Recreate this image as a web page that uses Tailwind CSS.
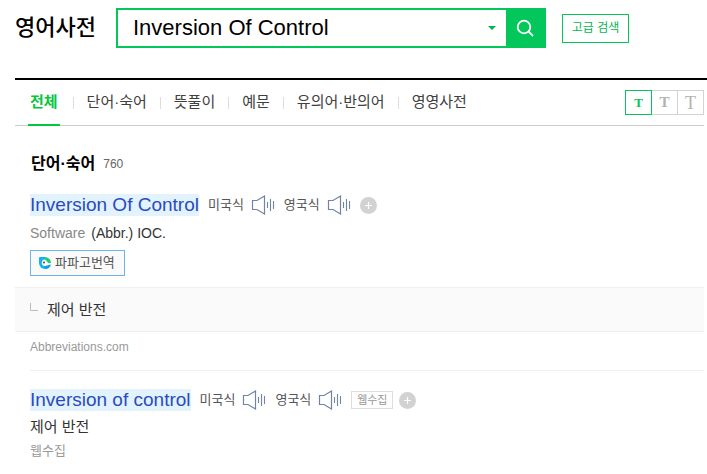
<!DOCTYPE html>
<html lang="ko">
<head>
    <meta charset="UTF-8">
    <meta name="viewport" content="width=device-width, initial-scale=1.0">
    <title>영어사전 - Inversion Of Control</title>
    <script src="https://cdn.jsdelivr.net/npm/@tailwindcss/browser@4"></script>
    <style>
        body { font-family: 'Liberation Sans', 'Noto Sans CJK KR', sans-serif; }
    </style>
</head>
<body class="bg-white text-[#333]">
    <svg class="hidden" aria-hidden="true">
        <symbol id="speaker" viewBox="0 0 24 20">
            <path d="M1.5 5.5H6L13.5 1v18L6 14.5H1.5z" fill="none" stroke="#7184a3" stroke-width="1.2"/>
            <path d="M16.5 7v6M19.5 4v12M22.5 6v8" fill="none" stroke="#7184a3" stroke-width="1.1"/>
        </symbol>
        <symbol id="plus" viewBox="0 0 17 17">
            <circle cx="8.5" cy="8.5" r="8.5" fill="#d2d2d2"/>
            <path d="M8.5 5v7M5 8.5h7" stroke="#fff" stroke-width="1.2"/>
        </symbol>
    </svg>

    <!-- Header -->
    <header class="flex items-center pl-[15px] pt-2">
        <h1 class="w-[101px] shrink-0 text-[22px] leading-10 font-medium text-black"><a href="#">영어사전</a></h1>
        <form class="flex h-10 w-[430px] border-2 border-[#03c75a]">
            <input type="text" id="query" name="query" value="Inversion Of Control" aria-label="검색어"
                class="min-w-0 flex-1 pl-[15px] pb-[2px] text-[22px] text-black focus:outline-none">
            <button type="button" aria-label="자동완성 펼치기" class="flex w-7 items-center justify-center">
                <svg class="h-1 w-2" viewBox="0 0 8 4"><path d="M0 0h8L4 4z" fill="#03b550"/></svg>
            </button>
            <button type="submit" aria-label="검색" class="flex w-[38px] items-center justify-center bg-[#03c75a]">
                <svg class="size-[18px]" viewBox="0 0 18 18" fill="none" stroke="#fff" stroke-width="1.8">
                    <circle cx="8" cy="8" r="6.3"/>
                    <path d="M12.4 12.4L17 17"/>
                </svg>
            </button>
        </form>
        <a href="#" class="ml-4 flex h-[29px] w-[67px] shrink-0 items-center justify-center border border-[#03c75a] text-xs text-[#03b550]">고급 검색</a>
    </header>

    <main class="mt-[30px] ml-[15px] border-t-2 border-black">
        <div class="mr-[3px]">
            <!-- Tabs -->
            <div class="flex h-[46px] items-center justify-between border-b border-[#ccc]">
                <nav class="flex h-[46px] items-center gap-[13px] pl-[13px] text-[15px] text-[#404040]">
                    <a href="#" class="flex h-[46px] items-center border-b-2 border-[#03c73c] px-[2px] pt-[2px] font-bold text-[#03c73c]">전체</a>
                    <span class="h-3 w-px bg-[#ddd]"></span>
                    <a href="#">단어·숙어</a>
                    <span class="h-3 w-px bg-[#ddd]"></span>
                    <a href="#">뜻풀이</a>
                    <span class="h-3 w-px bg-[#ddd]"></span>
                    <a href="#">예문</a>
                    <span class="h-3 w-px bg-[#ddd]"></span>
                    <a href="#">유의어·반의어</a>
                    <span class="h-3 w-px bg-[#ddd]"></span>
                    <a href="#">영영사전</a>
                </nav>
                <div class="flex font-['Liberation_Serif',serif] font-bold text-[#b2b2b2]">
                    <button type="button" aria-label="작은 글자" class="h-[25px] w-[27px] border border-[#03c75a] text-[13px] text-[#03c75a]">T</button>
                    <button type="button" aria-label="보통 글자" class="h-[25px] w-[26px] border-y border-r border-[#d3d3d3] text-[15px]">T</button>
                    <button type="button" aria-label="큰 글자" class="h-[25px] w-[26px] border-y border-r border-[#d3d3d3] text-lg leading-5 font-normal">T</button>
                </div>
            </div>

            <h2 class="mt-7 flex items-center gap-2 pl-4 text-base leading-5 font-bold text-black">
                단어·숙어 <span class="text-xs font-normal text-[#666]">760</span>
            </h2>

            <!-- Result 1 -->
            <article>
                <div class="mt-5 flex h-[22px] items-center pl-[15px] text-[13px] text-[#555]">
                    <a href="#" class="mr-[9px] bg-[#e2f3fe] text-[19px] leading-[22px] text-[#2a4bc0]">Inversion Of Control</a>
                    미국식
                    <button type="button" aria-label="미국식 발음 듣기" class="mr-[9px] ml-[7px]"><svg class="h-5 w-6"><use href="#speaker"/></svg></button>
                    영국식
                    <button type="button" aria-label="영국식 발음 듣기" class="mr-[9px] ml-[7px]"><svg class="h-5 w-6"><use href="#speaker"/></svg></button>
                    <button type="button" aria-label="단어장에 추가"><svg class="size-[17px]"><use href="#plus"/></svg></button>
                </div>
                <p class="mt-[7px] flex gap-[6px] pl-[15px] text-sm leading-5"><span class="text-[#888]">Software</span> (Abbr.) IOC.</p>
                <a href="#" class="mt-[7px] ml-[15px] flex h-[26px] w-[95px] items-center gap-1 border border-[#6eb4e8] bg-[#fafafa] pl-2 text-[13px] text-[#555]">
                    <svg class="size-3" viewBox="0 0 12 12">
                        <path d="M1 0h5v12a6 6 0 0 1-6-6V1a1 1 0 0 1 1-1z" fill="#13b0f5"/>
                        <path d="M6 0a6 6 0 0 1 6 6H6z" fill="#1fce6d"/>
                        <path d="M6 2.6a3.2 3.2 0 1 0 0 6.4L9.5 6.2z" fill="#fff"/>
                        <circle cx="5" cy="5.5" r="1" fill="#2a4b70"/>
                        <path d="M6 12V9l6-1.5A6 6 0 0 1 6 12z" fill="#129be6"/>
                    </svg>
                    파파고번역
                </a>
                <p class="mt-[11px] flex h-[45px] items-center border-y border-[#f0f0f0] bg-[#fafafa] pt-[2px] pl-[15px] text-[15px]">
                    <svg class="mr-[9px] mb-2 size-2" viewBox="0 0 8 8"><path d="M.5 0v7.5H8" fill="none" stroke="#bbb"/></svg>
                    제어 반전
                </p>
                <p class="mt-[5px] pl-[15px] text-xs leading-5 text-[#999]">Abbreviations.com</p>
            </article>

            <!-- Result 2 -->
            <article class="mt-[13px] ml-[15px] border-t border-[#f0f0f0] pt-[18px]">
                <div class="flex h-[22px] items-center text-[13px] text-[#555]">
                    <a href="#" class="mr-[9px] bg-[#e2f3fe] text-[19px] leading-[22px] text-[#2a4bc0]">Inversion of control</a>
                    미국식
                    <button type="button" aria-label="미국식 발음 듣기" class="mr-[9px] ml-[7px]"><svg class="h-5 w-6"><use href="#speaker"/></svg></button>
                    영국식
                    <button type="button" aria-label="영국식 발음 듣기" class="mr-[9px] ml-[7px]"><svg class="h-5 w-6"><use href="#speaker"/></svg></button>
                    <span class="mr-[6px] flex h-[18px] w-[42px] items-center justify-center border border-[#ddd] text-[11px] text-[#999]">웹수집</span>
                    <button type="button" aria-label="단어장에 추가"><svg class="size-[17px]"><use href="#plus"/></svg></button>
                </div>
                <p class="mt-1 text-[15px] leading-6">제어 반전</p>
                <p class="mt-[2px] text-[13px] leading-5 text-[#999]">웹수집</p>
            </article>
        </div>
    </main>
</body>
</html>
